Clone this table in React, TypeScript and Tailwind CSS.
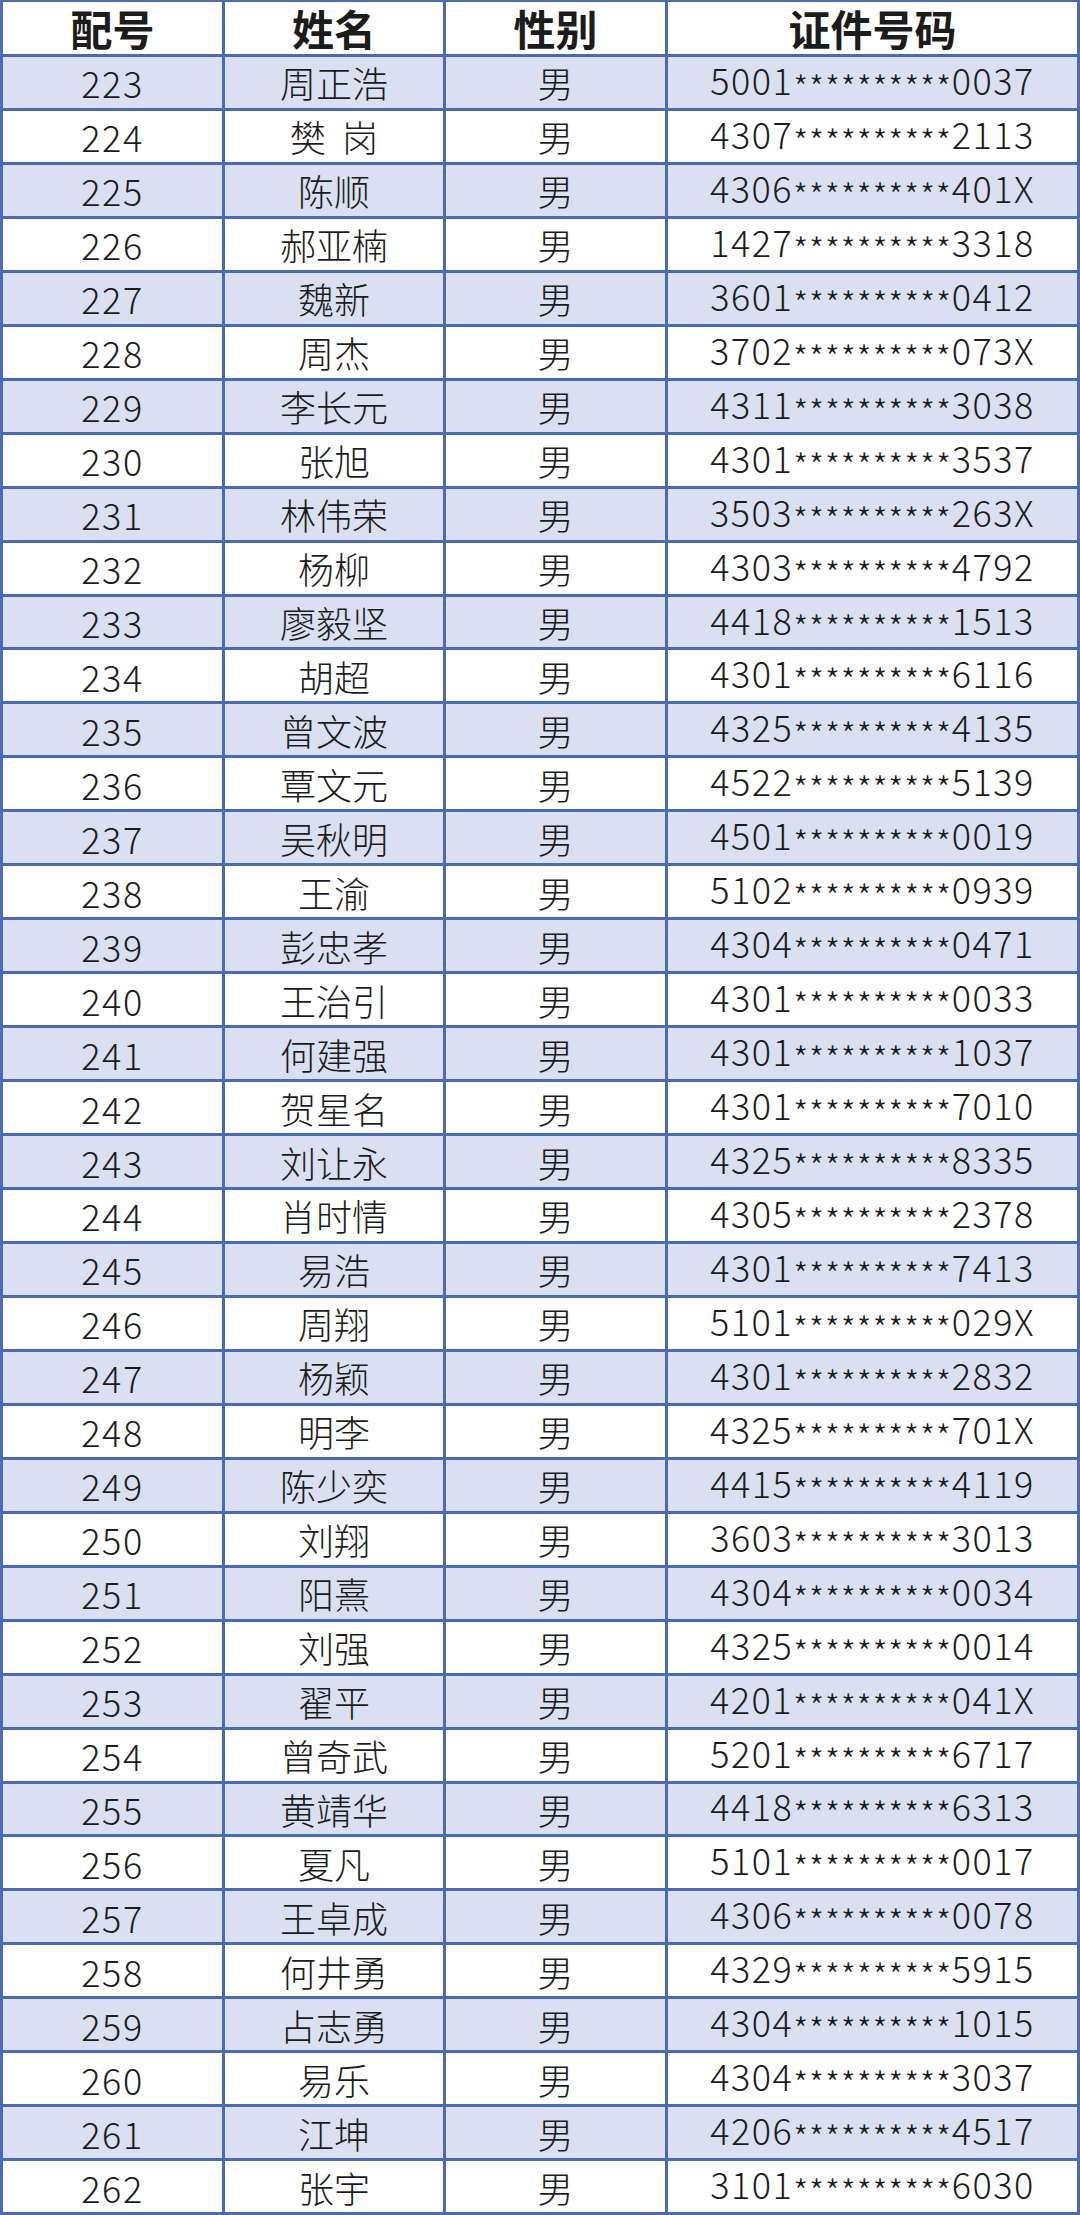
const rows: [string, string, string][] = [
  ["223", "周正浩", "5001**********0037"],
  ["224", "樊  岗", "4307**********2113"],
  ["225", "陈顺", "4306**********401X"],
  ["226", "郝亚楠", "1427**********3318"],
  ["227", "魏新", "3601**********0412"],
  ["228", "周杰", "3702**********073X"],
  ["229", "李长元", "4311**********3038"],
  ["230", "张旭", "4301**********3537"],
  ["231", "林伟荣", "3503**********263X"],
  ["232", "杨柳", "4303**********4792"],
  ["233", "廖毅坚", "4418**********1513"],
  ["234", "胡超", "4301**********6116"],
  ["235", "曾文波", "4325**********4135"],
  ["236", "覃文元", "4522**********5139"],
  ["237", "吴秋明", "4501**********0019"],
  ["238", "王渝", "5102**********0939"],
  ["239", "彭忠孝", "4304**********0471"],
  ["240", "王治引", "4301**********0033"],
  ["241", "何建强", "4301**********1037"],
  ["242", "贺星名", "4301**********7010"],
  ["243", "刘让永", "4325**********8335"],
  ["244", "肖时情", "4305**********2378"],
  ["245", "易浩", "4301**********7413"],
  ["246", "周翔", "5101**********029X"],
  ["247", "杨颖", "4301**********2832"],
  ["248", "明李", "4325**********701X"],
  ["249", "陈少奕", "4415**********4119"],
  ["250", "刘翔", "3603**********3013"],
  ["251", "阳熹", "4304**********0034"],
  ["252", "刘强", "4325**********0014"],
  ["253", "翟平", "4201**********041X"],
  ["254", "曾奇武", "5201**********6717"],
  ["255", "黄靖华", "4418**********6313"],
  ["256", "夏凡", "5101**********0017"],
  ["257", "王卓成", "4306**********0078"],
  ["258", "何井勇", "4329**********5915"],
  ["259", "占志勇", "4304**********1015"],
  ["260", "易乐", "4304**********3037"],
  ["261", "江坤", "4206**********4517"],
  ["262", "张宇", "3101**********6030"],
];

const font = { fontFamily: '"Noto Sans CJK SC", "Noto Sans", sans-serif' };

// masked id: stars sit on the middle of the digits
const IdNumber = ({ value }: { value: string }) => {
  const head = value.slice(0, 4);
  const tail = value.slice(-4);
  return (
    <span className="whitespace-nowrap">
      <span className="tracking-[1.5px]">{head}</span>
      <span className="text-[34px] tracking-[0.8px] align-[-6px]">{"**********"}</span>
      <span className="tracking-[1.5px]">{tail}</span>
    </span>
  );
};

export default function App() {
  return (
    <div
      className="w-[1080px] h-[2215px] flex flex-col bg-white border-l-[3px] border-r-[3px] border-t-[2px] border-[#4a6ab4] text-[#1c1c1c]"
      style={font}
    >
      <div className="h-[55px] shrink-0 grid grid-cols-[222px_221px_222px_1fr] border-b-[3px] border-[#4a6ab4] text-[42px] font-bold leading-none">
        <div className="flex items-center justify-center border-r-[3px] border-[#4a6ab4]">配号</div>
        <div className="flex items-center justify-center border-r-[3px] border-[#4a6ab4]">姓名</div>
        <div className="flex items-center justify-center border-r-[3px] border-[#4a6ab4]">性别</div>
        <div className="flex items-center justify-center">证件号码</div>
      </div>
      {rows.map(([no, name, id], i) => (
        <div
          key={no}
          className={`flex-1 grid grid-cols-[222px_221px_222px_1fr] border-b-[3px] border-[#4a6ab4] text-[36px] font-light leading-none ${
            i % 2 === 0 ? "bg-[#dae0f1]" : "bg-white"
          }`}
        >
          <div className="flex items-center justify-center border-r-[3px] border-[#4a6ab4] tracking-[1.5px]">{no}</div>
          <div className="flex items-center justify-center border-r-[3px] border-[#4a6ab4] whitespace-pre">{name}</div>
          <div className="flex items-center justify-center border-r-[3px] border-[#4a6ab4]">男</div>
          <div className="flex items-center justify-center">
            <IdNumber value={id} />
          </div>
        </div>
      ))}
    </div>
  );
}
